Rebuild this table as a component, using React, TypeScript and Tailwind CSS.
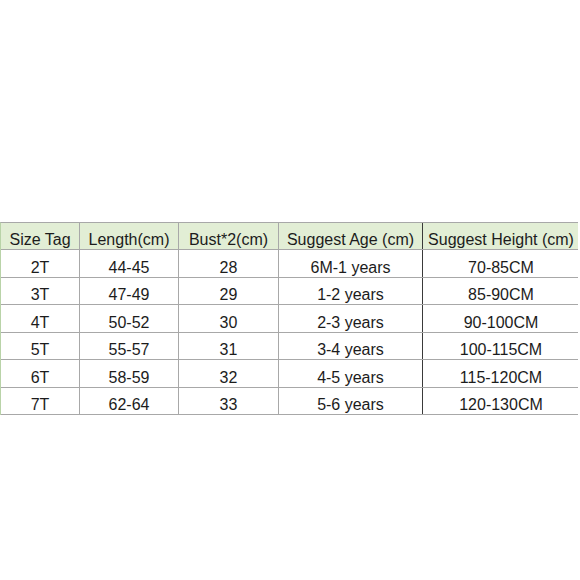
import React from "react";

const cols = ["w-[79px]", "w-[99px]", "w-[100px]", "w-[144px]", "w-[156px]"];
const header = ["Size Tag", "Length(cm)", "Bust*2(cm)", "Suggest Age (cm)", "Suggest Height (cm)"];
const rows = [
  ["2T", "44-45", "28", "6M-1 years", "70-85CM"],
  ["3T", "47-49", "29", "1-2 years", "85-90CM"],
  ["4T", "50-52", "30", "2-3 years", "90-100CM"],
  ["5T", "55-57", "31", "3-4 years", "100-115CM"],
  ["6T", "58-59", "32", "4-5 years", "115-120CM"],
  ["7T", "62-64", "33", "5-6 years", "120-130CM"],
];
const rowH = ["h-[27px]", "h-[26px]", "h-[27px]", "h-[26px]", "h-[27px]", "h-[26px]"];

function Cell({ text, i, h }: { text: string; i: number; h: string }) {
  const border =
    i === 4 ? "" : i === 3 ? "border-r border-r-[#3a3a3a]" : "border-r border-r-[#a8a8a8]";
  return (
    <div className={`${cols[i]} ${h} ${border} flex items-end justify-center shrink-0`}>
      <span className="leading-none pb-[1px] text-[16px]">{text}</span>
    </div>
  );
}

export default function App() {
  return (
    <div
      className="w-[580px] h-[580px] bg-white text-[#1c1c1c]"
      style={{ fontFamily: '"Liberation Sans", Arial, sans-serif' }}
    >
      <div className="pt-[222px]">
        <div className="w-[578px] border-t border-t-[#a8a8a8] border-l border-l-[#b9d3a8]">
          <div className="flex bg-[#e2eed5] border-b border-b-[#a8a8a8]">
            {header.map((t, i) => (
              <Cell key={i} text={t} i={i} h="h-[26px]" />
            ))}
          </div>
          {rows.map((r, ri) => (
            <div key={ri} className="flex border-b border-b-[#a8a8a8]">
              {r.map((t, i) => (
                <Cell key={i} text={t} i={i} h={rowH[ri]} />
              ))}
            </div>
          ))}
        </div>
      </div>
    </div>
  );
}
